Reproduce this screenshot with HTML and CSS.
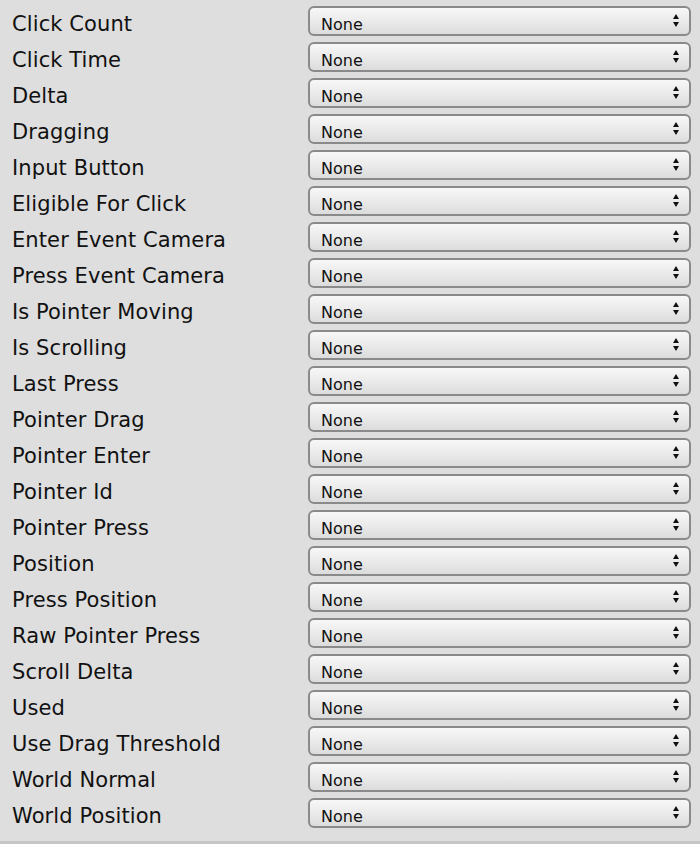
FILE: index.html
```html
<!DOCTYPE html>
<html>
<head>
<meta charset="utf-8">
<link rel="stylesheet" href="styles.css">
</head>
<body>
<div class="panel">
  <div class="row"><div class="label">Click Count</div><div class="select"><span class="value">None</span><svg class="arrows" width="6" height="13" viewBox="0 0 6 13"><path d="M3 0 L6 5 L0 5 Z M0 8 L6 8 L3 13 Z" fill="#111"/></svg></div></div>
  <div class="row"><div class="label">Click Time</div><div class="select"><span class="value">None</span><svg class="arrows" width="6" height="13" viewBox="0 0 6 13"><path d="M3 0 L6 5 L0 5 Z M0 8 L6 8 L3 13 Z" fill="#111"/></svg></div></div>
  <div class="row"><div class="label">Delta</div><div class="select"><span class="value">None</span><svg class="arrows" width="6" height="13" viewBox="0 0 6 13"><path d="M3 0 L6 5 L0 5 Z M0 8 L6 8 L3 13 Z" fill="#111"/></svg></div></div>
  <div class="row"><div class="label">Dragging</div><div class="select"><span class="value">None</span><svg class="arrows" width="6" height="13" viewBox="0 0 6 13"><path d="M3 0 L6 5 L0 5 Z M0 8 L6 8 L3 13 Z" fill="#111"/></svg></div></div>
  <div class="row"><div class="label">Input Button</div><div class="select"><span class="value">None</span><svg class="arrows" width="6" height="13" viewBox="0 0 6 13"><path d="M3 0 L6 5 L0 5 Z M0 8 L6 8 L3 13 Z" fill="#111"/></svg></div></div>
  <div class="row"><div class="label">Eligible For Click</div><div class="select"><span class="value">None</span><svg class="arrows" width="6" height="13" viewBox="0 0 6 13"><path d="M3 0 L6 5 L0 5 Z M0 8 L6 8 L3 13 Z" fill="#111"/></svg></div></div>
  <div class="row"><div class="label">Enter Event Camera</div><div class="select"><span class="value">None</span><svg class="arrows" width="6" height="13" viewBox="0 0 6 13"><path d="M3 0 L6 5 L0 5 Z M0 8 L6 8 L3 13 Z" fill="#111"/></svg></div></div>
  <div class="row"><div class="label">Press Event Camera</div><div class="select"><span class="value">None</span><svg class="arrows" width="6" height="13" viewBox="0 0 6 13"><path d="M3 0 L6 5 L0 5 Z M0 8 L6 8 L3 13 Z" fill="#111"/></svg></div></div>
  <div class="row"><div class="label">Is Pointer Moving</div><div class="select"><span class="value">None</span><svg class="arrows" width="6" height="13" viewBox="0 0 6 13"><path d="M3 0 L6 5 L0 5 Z M0 8 L6 8 L3 13 Z" fill="#111"/></svg></div></div>
  <div class="row"><div class="label">Is Scrolling</div><div class="select"><span class="value">None</span><svg class="arrows" width="6" height="13" viewBox="0 0 6 13"><path d="M3 0 L6 5 L0 5 Z M0 8 L6 8 L3 13 Z" fill="#111"/></svg></div></div>
  <div class="row"><div class="label">Last Press</div><div class="select"><span class="value">None</span><svg class="arrows" width="6" height="13" viewBox="0 0 6 13"><path d="M3 0 L6 5 L0 5 Z M0 8 L6 8 L3 13 Z" fill="#111"/></svg></div></div>
  <div class="row"><div class="label">Pointer Drag</div><div class="select"><span class="value">None</span><svg class="arrows" width="6" height="13" viewBox="0 0 6 13"><path d="M3 0 L6 5 L0 5 Z M0 8 L6 8 L3 13 Z" fill="#111"/></svg></div></div>
  <div class="row"><div class="label">Pointer Enter</div><div class="select"><span class="value">None</span><svg class="arrows" width="6" height="13" viewBox="0 0 6 13"><path d="M3 0 L6 5 L0 5 Z M0 8 L6 8 L3 13 Z" fill="#111"/></svg></div></div>
  <div class="row"><div class="label">Pointer Id</div><div class="select"><span class="value">None</span><svg class="arrows" width="6" height="13" viewBox="0 0 6 13"><path d="M3 0 L6 5 L0 5 Z M0 8 L6 8 L3 13 Z" fill="#111"/></svg></div></div>
  <div class="row"><div class="label">Pointer Press</div><div class="select"><span class="value">None</span><svg class="arrows" width="6" height="13" viewBox="0 0 6 13"><path d="M3 0 L6 5 L0 5 Z M0 8 L6 8 L3 13 Z" fill="#111"/></svg></div></div>
  <div class="row"><div class="label">Position</div><div class="select"><span class="value">None</span><svg class="arrows" width="6" height="13" viewBox="0 0 6 13"><path d="M3 0 L6 5 L0 5 Z M0 8 L6 8 L3 13 Z" fill="#111"/></svg></div></div>
  <div class="row"><div class="label">Press Position</div><div class="select"><span class="value">None</span><svg class="arrows" width="6" height="13" viewBox="0 0 6 13"><path d="M3 0 L6 5 L0 5 Z M0 8 L6 8 L3 13 Z" fill="#111"/></svg></div></div>
  <div class="row"><div class="label">Raw Pointer Press</div><div class="select"><span class="value">None</span><svg class="arrows" width="6" height="13" viewBox="0 0 6 13"><path d="M3 0 L6 5 L0 5 Z M0 8 L6 8 L3 13 Z" fill="#111"/></svg></div></div>
  <div class="row"><div class="label">Scroll Delta</div><div class="select"><span class="value">None</span><svg class="arrows" width="6" height="13" viewBox="0 0 6 13"><path d="M3 0 L6 5 L0 5 Z M0 8 L6 8 L3 13 Z" fill="#111"/></svg></div></div>
  <div class="row"><div class="label">Used</div><div class="select"><span class="value">None</span><svg class="arrows" width="6" height="13" viewBox="0 0 6 13"><path d="M3 0 L6 5 L0 5 Z M0 8 L6 8 L3 13 Z" fill="#111"/></svg></div></div>
  <div class="row"><div class="label">Use Drag Threshold</div><div class="select"><span class="value">None</span><svg class="arrows" width="6" height="13" viewBox="0 0 6 13"><path d="M3 0 L6 5 L0 5 Z M0 8 L6 8 L3 13 Z" fill="#111"/></svg></div></div>
  <div class="row"><div class="label">World Normal</div><div class="select"><span class="value">None</span><svg class="arrows" width="6" height="13" viewBox="0 0 6 13"><path d="M3 0 L6 5 L0 5 Z M0 8 L6 8 L3 13 Z" fill="#111"/></svg></div></div>
  <div class="row"><div class="label">World Position</div><div class="select"><span class="value">None</span><svg class="arrows" width="6" height="13" viewBox="0 0 6 13"><path d="M3 0 L6 5 L0 5 Z M0 8 L6 8 L3 13 Z" fill="#111"/></svg></div></div>
</div>
<div class="band"></div>
</body>
</html>
```

FILE: styles.css
```css
html, body {
  margin: 0;
  padding: 0;
  background: #dedede;
}

body {
  font-family: "DejaVu Sans", "Liberation Sans", sans-serif;
  color: #111;
}

.panel {
  display: flex;
  flex-direction: column;
  gap: 6px;
  padding: 6px 0 14px 0;
  height: 841px;
  box-sizing: border-box;
}

.row {
  display: flex;
  align-items: flex-start;
  height: 30px;
}

.label {
  width: 308px;
  box-sizing: border-box;
  padding-left: 12px;
  padding-top: 6px;
  height: 30px;
  font-size: 21px;
  line-height: 24px;
  white-space: nowrap;
  letter-spacing: 0.1px;
}

.select {
  width: 383px;
  height: 30px;
  box-sizing: border-box;
  border: 2px solid #8a8a8a;
  border-radius: 6px;
  background: linear-gradient(to bottom, #f7f7f7 0%, #ececec 45%, #dcdcdc 100%);
  display: flex;
  align-items: flex-start;
  justify-content: space-between;
  padding: 0 10px 0 11px;
}

.value {
  font-size: 16px;
  line-height: 21px;
  padding-top: 6px;
}

.arrows {
  margin-top: 6px;
  display: block;
}

.band {
  height: 3px;
  background: #c6c6c6;
}
```
